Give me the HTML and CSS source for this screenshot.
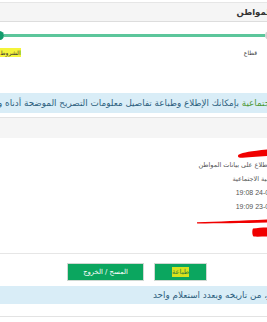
FILE: index.html
```html
<!DOCTYPE html>
<html lang="ar">
<head>
<meta charset="utf-8">
<link rel="stylesheet" href="styles.css">
</head>
<body>
<div class="page">
  <div class="header"><span class="header-title">بيانات المواطن</span></div>

  <div class="steps">
    <span class="dot dot-gray"></span>
    <span class="track"></span>
    <span class="dot dot-green"></span>
  </div>
  <div class="step-labels">
    <span class="step-label step-right">قطاع</span>
    <span class="step-label step-left"><mark class="hl">الشروط</mark></span>
  </div>

  <div class="alert alert-top"><span class="alert-text"><span class="green">الاجتماعية</span> بإمكانك الإطلاع وطباعة تفاصيل معلومات التصريح الموضحة أدناه و</span></div>

  <div class="panel">
    <div class="panel-heading"></div>
    <div class="panel-body">
      <svg class="redact redact-1" width="30" height="10" viewBox="0 0 30 10"><path d="M2 6.5 C6 4.5 14 3 30 1.5 L30 8 C20 8.5 10 9.5 3 9.8 C0.5 9.5 0.5 7 2 6.5 Z" fill="#f00000"/></svg>
      <div class="row row-a">الاطلاع على بيانات المواطن</div>
      <div class="row row-b">التنمية الاجتماعية</div>
      <div class="row num">24-01-2024 19:08</div>
      <div class="row num">23-01-2024 19:09</div>
      <svg class="redact redact-2" width="70" height="5" viewBox="0 0 70 5"><path d="M0 3.2 C20 2.6 45 1.4 70 0.4 L70 3.6 C45 4.2 20 4.4 1 4.6 C-0.5 4.2 -0.5 3.4 0 3.2 Z" fill="#f00000"/></svg>
      <svg class="redact redact-3" width="15" height="10" viewBox="0 0 15 10"><path d="M1 1.5 C5 1 10 0.5 15 0.5 L15 9.5 C10 9.5 5 9.8 1.5 9.5 C0 8 0 3 1 1.5 Z" fill="#f00000"/></svg>
    </div>
    <div class="panel-footer">
      <div class="buttons">
        <button class="btn"><mark class="hl hl-btn">طباعة</mark></button>
        <button class="btn btn-wide">المسح / الخروج</button>
      </div>
      <div class="alert alert-bottom"><span class="alert-text">يسمح بالاطلاع لمدة شهر، من تاريخه وبعدد استعلام واحد</span></div>
    </div>
  </div>
</div>
</body>
</html>
```

FILE: styles.css
```css
html, body {
  margin: 0;
  padding: 0;
  background: #ffffff;
  overflow: hidden;
}
body {
  font-family: "DejaVu Sans", sans-serif;
  color: #555555;
}
.page {
  direction: rtl;
  width: 274px;
  padding-top: 2px;
}
.header {
  height: 18px;
  background: #f5f5f5;
  border-top: 1px solid #e6e6e6;
  border-bottom: 1px solid #dddddd;
  display: flex;
  align-items: center;
  white-space: nowrap;
}
.header-title {
  font-size: 8.5px;
  font-weight: bold;
  color: #333333;
  margin-right: -26px;
}
.steps {
  display: flex;
  align-items: center;
  padding-top: 9px;
}
.dot {
  flex: none;
  width: 9px;
  height: 9px;
  border-radius: 50%;
}
.dot-gray {
  background: #d0d0d0;
}
.dot-green {
  background: #129b6c;
  margin-left: -5px;
}
.track {
  flex: 1;
  height: 3px;
  background: #5cc69b;
}
.step-labels {
  display: flex;
  justify-content: space-between;
  align-items: center;
  height: 10px;
  margin-top: 7px;
  font-size: 6px;
  color: #444444;
}
.step-right {
  margin-right: 17px;
}
.hl {
  background: #f4f43a;
  color: #333333;
  padding: 1px 0;
}
.alert {
  background: #d9edf7;
  color: #2d5f7e;
  white-space: nowrap;
  font-size: 8.8px;
  display: flex;
  justify-content: flex-end;
}
.alert-text {
  flex: none;
}
.alert-top {
  margin-top: 36px;
  height: 20px;
  line-height: 20px;
}
.alert-top .alert-text {
  margin-left: -2px;
}
.green {
  color: #4f9a3a;
}
.panel {
  margin-top: 4px;
  border-top: 1px solid #e3e3e3;
  border-bottom: 1px solid #e3e3e3;
}
.panel-heading {
  height: 20px;
  background: #f5f5f5;
}
.panel-body {
  padding-top: 10px;
  padding-bottom: 16px;
  display: flex;
  flex-direction: column;
  align-items: flex-start;
}
.redact {
  display: block;
}
.redact-1 {
  margin-right: 7px;
}
.redact-2 {
  margin-top: 5px;
  margin-right: 7px;
}
.redact-3 {
  margin-top: 3px;
  margin-right: 7px;
}
.row {
  height: 14px;
  line-height: 14px;
  font-size: 6.5px;
  color: #555555;
  white-space: nowrap;
}
.row-a {
  margin-right: 1px;
}
.row-b {
  margin-right: -4px;
}
.row.num {
  font-family: "Liberation Sans", "DejaVu Sans", sans-serif;
  font-size: 7px;
  margin-right: -17px;
}
.panel-footer {
  border-top: 1px solid #e6e6e6;
  padding-top: 9px;
  padding-bottom: 12px;
}
.buttons {
  display: flex;
  justify-content: center;
  gap: 10px;
}
.btn {
  height: 18px;
  width: 53px;
  padding: 0;
  background: #0ba65f;
  border: 1px solid #cfd8d2;
  color: #ffffff;
  font-family: "DejaVu Sans", sans-serif;
  font-size: 6.8px;
}
.btn-wide {
  width: 77px;
}
.hl-btn {
  background: #d7e21e;
  color: #2f7d3a;
}
.alert-bottom {
  margin-top: 5px;
  height: 18px;
  line-height: 18px;
  padding-left: 153px;
}
```
